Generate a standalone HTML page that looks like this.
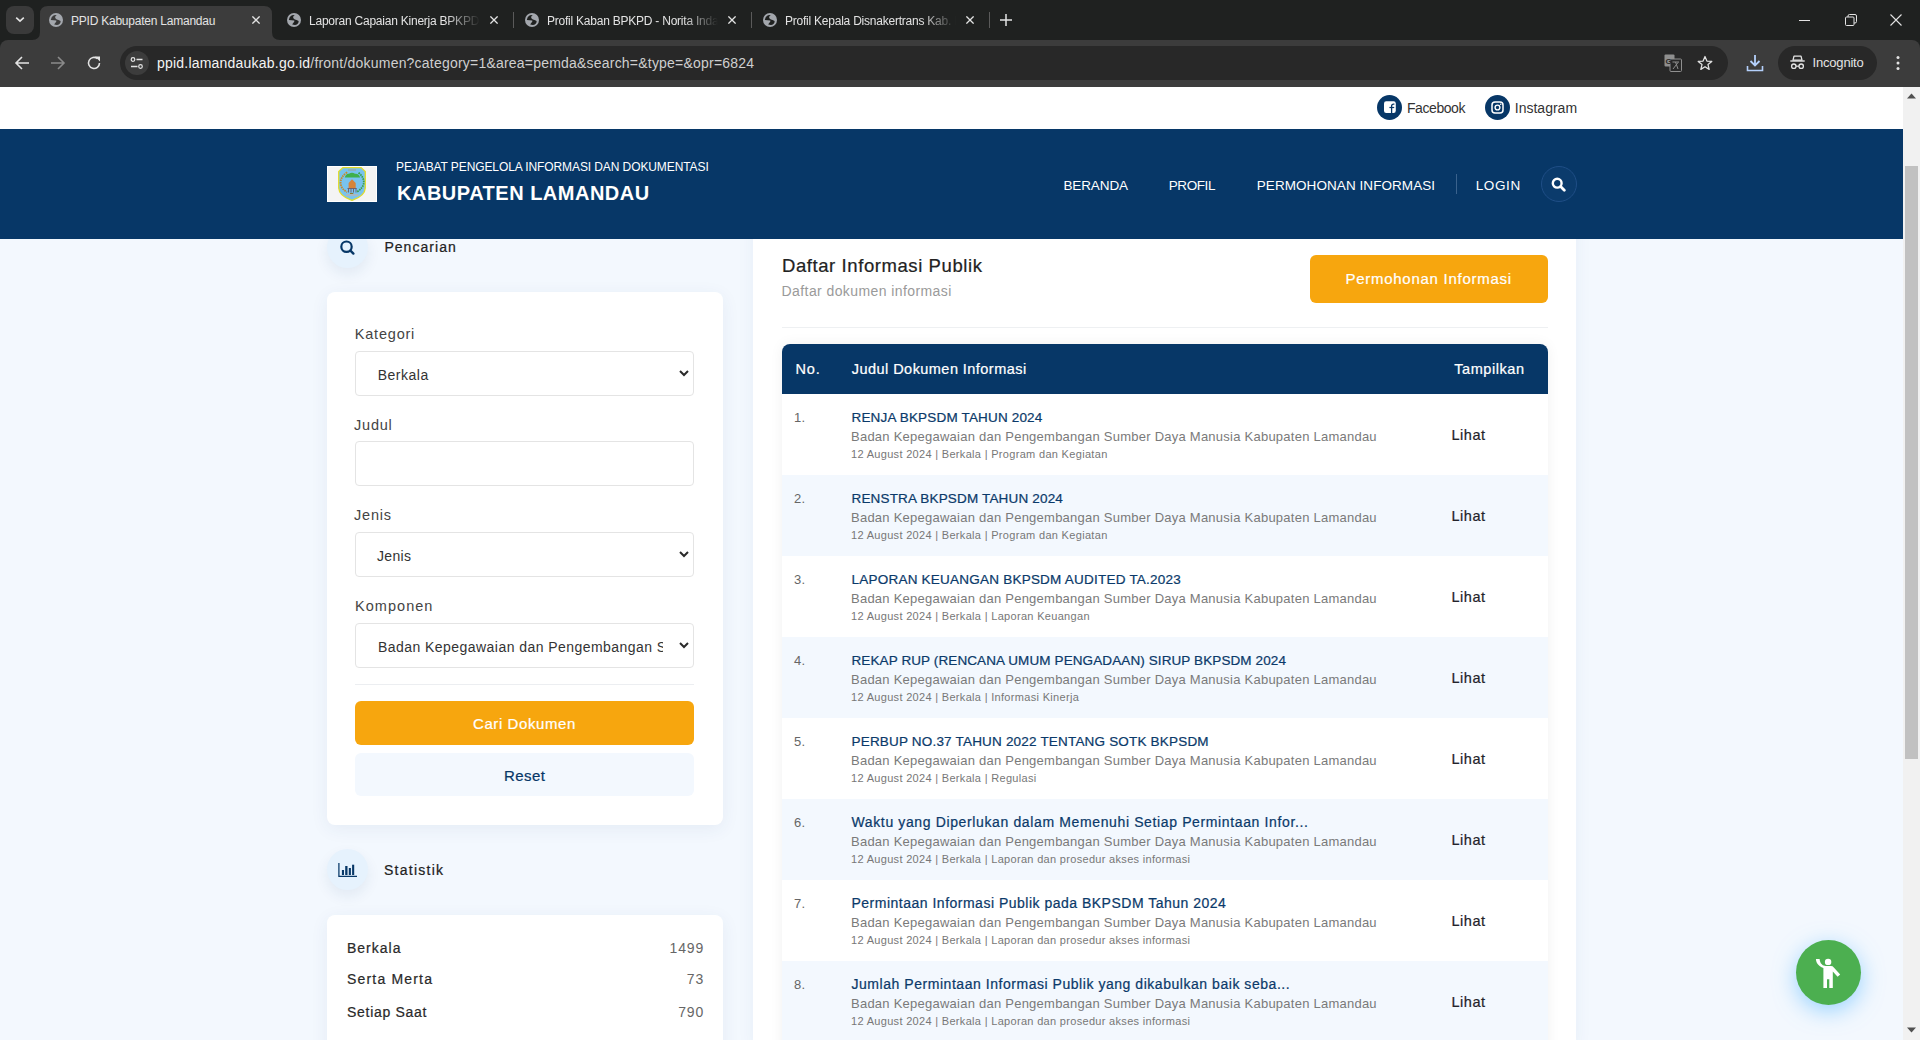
<!DOCTYPE html>
<html><head><meta charset="utf-8"><title>PPID Kabupaten Lamandau</title><style>
*{box-sizing:border-box;margin:0;padding:0}
html,body{width:1920px;height:1040px;overflow:hidden;font-family:"Liberation Sans",sans-serif;background:#f3f8fe}
.abs{position:absolute}
.t{position:absolute;white-space:nowrap}
.fade{-webkit-mask-image:linear-gradient(to right,#000 80%,transparent)}
</style></head><body>
<div class="abs" style="left:0;top:0;width:1920px;height:50px;background:#1f2120"></div>
<div class="abs" style="left:0;top:40px;width:1920px;height:47px;background:#3c3c3c;border-radius:8px 8px 0 0"></div>
<div class="abs" style="left:6px;top:6px;width:28px;height:28px;border-radius:8px;background:#3a3a3a"></div>
<svg class="abs" style="left:14px;top:14px" width="12" height="12" viewBox="0 0 12 12"><path d="M2.2 3.6 L6 7.2 L9.8 3.6" stroke="#e3e3e3" stroke-width="1.6" fill="none"/></svg>
<svg class="abs" style="left:32px;top:6px" width="250" height="34" viewBox="0 0 250 34"><path d="M0 34 Q8 34 8 26 L8 8 Q8 0 16 0 L232 0 Q240 0 240 8 L240 26 Q240 34 248 34 Z" fill="#3c3c3c"/></svg>
<svg class="abs" style="left:49px;top:13px" width="14" height="14" viewBox="0 0 14 14"><circle cx="7" cy="7" r="7" fill="#a3a7ad"/><path d="M1.9 7 L1.9 6.5 Q2.2 3.5 4.9 2.2 Q6.3 1.8 7.7 1.9 Q6 3 6.1 4.2 Q6.2 5.6 7.9 6.5 Q9.5 6.8 11.6 7.9 Q12 8.8 10.7 10.7 Q9.3 11.9 7.9 11.9 L5.2 11.6 Q5.5 10.4 7 8.9 Q7.6 8 7.3 7.4 Q5 7 1.9 7 Z" fill="#3c3c3c"/></svg>
<div class="t " style="left:71.00px;top:14.84px;font-size:12px;line-height:12px;color:#e3e3e3;letter-spacing:-0.23px;">PPID Kabupaten Lamandau</div>

<svg class="abs" style="left:252px;top:16px" width="8" height="8" viewBox="0 0 8 8"><path d="M0.4 0.4 L7.6 7.6 M7.6 0.4 L0.4 7.6" stroke="#e3e3e3" stroke-width="1.3"/></svg>
<svg class="abs" style="left:287px;top:13px" width="14" height="14" viewBox="0 0 14 14"><circle cx="7" cy="7" r="7" fill="#a3a7ad"/><path d="M1.9 7 L1.9 6.5 Q2.2 3.5 4.9 2.2 Q6.3 1.8 7.7 1.9 Q6 3 6.1 4.2 Q6.2 5.6 7.9 6.5 Q9.5 6.8 11.6 7.9 Q12 8.8 10.7 10.7 Q9.3 11.9 7.9 11.9 L5.2 11.6 Q5.5 10.4 7 8.9 Q7.6 8 7.3 7.4 Q5 7 1.9 7 Z" fill="#1f2120"/></svg>
<div class="abs fade" style="left:309px;top:8px;width:171px;height:24px;overflow:hidden"><div class="t " style="left:0.00px;top:6.84px;font-size:12px;line-height:12px;color:#e3e3e3;letter-spacing:-0.23px;">Laporan Capaian Kinerja BPKPD</div>
</div>
<svg class="abs" style="left:490px;top:16px" width="8" height="8" viewBox="0 0 8 8"><path d="M0.4 0.4 L7.6 7.6 M7.6 0.4 L0.4 7.6" stroke="#e3e3e3" stroke-width="1.3"/></svg>
<div class="abs" style="left:513px;top:12px;width:1px;height:16px;background:#5a5a5a"></div>
<svg class="abs" style="left:525px;top:13px" width="14" height="14" viewBox="0 0 14 14"><circle cx="7" cy="7" r="7" fill="#a3a7ad"/><path d="M1.9 7 L1.9 6.5 Q2.2 3.5 4.9 2.2 Q6.3 1.8 7.7 1.9 Q6 3 6.1 4.2 Q6.2 5.6 7.9 6.5 Q9.5 6.8 11.6 7.9 Q12 8.8 10.7 10.7 Q9.3 11.9 7.9 11.9 L5.2 11.6 Q5.5 10.4 7 8.9 Q7.6 8 7.3 7.4 Q5 7 1.9 7 Z" fill="#1f2120"/></svg>
<div class="abs fade" style="left:547px;top:8px;width:171px;height:24px;overflow:hidden"><div class="t " style="left:0.00px;top:6.84px;font-size:12px;line-height:12px;color:#e3e3e3;letter-spacing:-0.23px;">Profil Kaban BPKPD - Norita Indah</div>
</div>
<svg class="abs" style="left:728px;top:16px" width="8" height="8" viewBox="0 0 8 8"><path d="M0.4 0.4 L7.6 7.6 M7.6 0.4 L0.4 7.6" stroke="#e3e3e3" stroke-width="1.3"/></svg>
<div class="abs" style="left:751px;top:12px;width:1px;height:16px;background:#5a5a5a"></div>
<svg class="abs" style="left:763px;top:13px" width="14" height="14" viewBox="0 0 14 14"><circle cx="7" cy="7" r="7" fill="#a3a7ad"/><path d="M1.9 7 L1.9 6.5 Q2.2 3.5 4.9 2.2 Q6.3 1.8 7.7 1.9 Q6 3 6.1 4.2 Q6.2 5.6 7.9 6.5 Q9.5 6.8 11.6 7.9 Q12 8.8 10.7 10.7 Q9.3 11.9 7.9 11.9 L5.2 11.6 Q5.5 10.4 7 8.9 Q7.6 8 7.3 7.4 Q5 7 1.9 7 Z" fill="#1f2120"/></svg>
<div class="abs fade" style="left:785px;top:8px;width:171px;height:24px;overflow:hidden"><div class="t " style="left:0.00px;top:6.84px;font-size:12px;line-height:12px;color:#e3e3e3;letter-spacing:-0.23px;">Profil Kepala Disnakertrans Kab. Lamandau</div>
</div>
<svg class="abs" style="left:966px;top:16px" width="8" height="8" viewBox="0 0 8 8"><path d="M0.4 0.4 L7.6 7.6 M7.6 0.4 L0.4 7.6" stroke="#e3e3e3" stroke-width="1.3"/></svg>
<div class="abs" style="left:989px;top:12px;width:1px;height:16px;background:#5a5a5a"></div>
<svg class="abs" style="left:999px;top:13px" width="14" height="14" viewBox="0 0 14 14"><path d="M7 1 V13 M1 7 H13" stroke="#e3e3e3" stroke-width="1.5"/></svg>
<div class="abs" style="left:1799px;top:20px;width:11px;height:1px;background:#e3e3e3"></div>
<svg class="abs" style="left:1845px;top:14px" width="12" height="12" viewBox="0 0 12 12"><rect x="0.5" y="3" width="8.5" height="8.5" rx="1" stroke="#e3e3e3" fill="none"/><path d="M3 3 V2 Q3 0.5 4.5 0.5 H10 Q11.5 0.5 11.5 2 V7.5 Q11.5 9 10 9 H9" stroke="#e3e3e3" fill="none"/></svg>
<svg class="abs" style="left:1890px;top:14px" width="12" height="12" viewBox="0 0 12 12"><path d="M0.5 0.5 L11.5 11.5 M11.5 0.5 L0.5 11.5" stroke="#e3e3e3" stroke-width="1.1"/></svg>
<svg class="abs" style="left:14px;top:55px" width="16" height="16" viewBox="0 0 16 16"><path d="M15 8 H2 M8 2 L2 8 L8 14" stroke="#e3e3e3" stroke-width="1.6" fill="none"/></svg>
<svg class="abs" style="left:50px;top:55px" width="16" height="16" viewBox="0 0 16 16"><path d="M1 8 H14 M8 2 L14 8 L8 14" stroke="#8a8a8a" stroke-width="1.6" fill="none"/></svg>
<svg class="abs" style="left:86px;top:55px" width="16" height="16" viewBox="0 0 16 16"><path d="M13.5 8 A5.5 5.5 0 1 1 11.5 3.7" stroke="#e3e3e3" stroke-width="1.6" fill="none"/><path d="M9 1.5 H14 V6.5 Z" fill="#e3e3e3"/></svg>
<div class="abs" style="left:120px;top:46px;width:1608px;height:34px;border-radius:17px;background:#282828"></div>
<div class="abs" style="left:125px;top:51px;width:24px;height:24px;border-radius:12px;background:#3c3c3c"></div>
<svg class="abs" style="left:130px;top:56px" width="14" height="14" viewBox="0 0 14 14"><circle cx="3" cy="3.5" r="1.8" stroke="#e3e3e3" stroke-width="1.2" fill="none"/><path d="M6.5 3.5 H12.5 M1 10.5 H7.5" stroke="#e3e3e3" stroke-width="1.3"/><circle cx="10.5" cy="10.5" r="1.8" stroke="#e3e3e3" stroke-width="1.2" fill="none"/></svg>
<div class="t " style="left:157.00px;top:56.15px;font-size:14px;line-height:14px;color:#cfcfcf;letter-spacing:0.21px;"><span style="color:#f4f4f4">ppid.lamandaukab.go.id</span>/front/dokumen?category=1&amp;area=pemda&amp;search=&amp;type=&amp;opr=6824</div>


<svg class="abs" style="left:1664px;top:54px" width="18" height="18" viewBox="0 0 18 18"><rect x="0.5" y="0.5" width="10" height="12" rx="1" fill="#8f8f8f"/><rect x="6" y="5" width="11.5" height="12.5" rx="1" fill="#282828" stroke="#8f8f8f"/><text x="1.5" y="10" font-size="8" font-family="Liberation Sans" font-weight="bold" fill="#282828">G</text><path d="M8.5 8 H15 M11.5 8 L14 15 M14 8.5 L9 15" stroke="#8f8f8f" stroke-width="1"/></svg>
<svg class="abs" style="left:1697px;top:55px" width="16" height="16" viewBox="0 0 16 16"><path d="M8 1.5 L9.9 6.1 L14.8 6.4 L11 9.6 L12.2 14.4 L8 11.7 L3.8 14.4 L5 9.6 L1.2 6.4 L6.1 6.1 Z" stroke="#e3e3e3" stroke-width="1.25" fill="none" stroke-linejoin="round"/></svg>
<svg class="abs" style="left:1746px;top:54px" width="18" height="18" viewBox="0 0 18 18"><path d="M9 1 V11 M4.5 7 L9 11.5 L13.5 7" stroke="#b4d0fb" stroke-width="1.8" fill="none"/><path d="M1.5 12 V16.5 H16.5 V12" stroke="#b4d0fb" stroke-width="1.6" fill="none"/></svg>
<div class="abs" style="left:1778px;top:46px;width:99px;height:34px;border-radius:17px;background:#282828"></div>
<svg class="abs" style="left:1790px;top:55px" width="15" height="15" viewBox="0 0 15 15"><path d="M4 1.2 H11 L12 5.2 H3 Z" stroke="#e3e3e3" stroke-width="1.3" fill="none" stroke-linejoin="round"/><path d="M0.3 6 H14.7" stroke="#e3e3e3" stroke-width="1.4"/><circle cx="3.8" cy="11.2" r="2.2" stroke="#e3e3e3" stroke-width="1.3" fill="none"/><circle cx="11.2" cy="11.2" r="2.2" stroke="#e3e3e3" stroke-width="1.3" fill="none"/><path d="M6 11.2 H9" stroke="#e3e3e3" stroke-width="1.2"/></svg>
<div class="t " style="left:1812.60px;top:56.00px;font-size:13px;line-height:13px;color:#e3e3e3;letter-spacing:-0.2px;">Incognito</div>

<svg class="abs" style="left:1895px;top:55px" width="6" height="16" viewBox="0 0 6 16"><circle cx="3" cy="2.5" r="1.5" fill="#e3e3e3"/><circle cx="3" cy="8" r="1.5" fill="#e3e3e3"/><circle cx="3" cy="13.5" r="1.5" fill="#e3e3e3"/></svg>
<div class="abs" style="left:0;top:87px;width:1903px;height:953px;background:#f3f8fe"></div>
<div class="abs" style="left:753px;top:150px;width:823px;height:900px;background:#fff;border-radius:8px;box-shadow:0 0 18px rgba(40,70,130,.055)"></div>
<div class="t " style="left:782.00px;top:256.64px;font-size:18.5px;line-height:18.5px;color:#222;letter-spacing:0.58px;-webkit-text-stroke:0.22px #222;">Daftar Informasi Publik</div>

<div class="t " style="left:781.60px;top:284.15px;font-size:14px;line-height:14px;color:#9a9a9a;letter-spacing:0.41px;">Daftar dokumen informasi</div>

<div class="abs" style="left:1310px;top:255px;width:238px;height:48px;border-radius:6px;background:#f7a60e"></div>
<div class="t " style="left:1345.40px;top:271.40px;font-size:15px;line-height:15px;color:#fff;letter-spacing:0.74px;-webkit-text-stroke:0.22px #fff;">Permohonan Informasi</div>

<div class="abs" style="left:782px;top:327px;width:766px;height:1px;background:#eef0f2"></div>
<div class="abs" style="left:782px;top:344px;width:766px;height:720px;border-radius:8px 8px 0 0;box-shadow:0 0 14px rgba(0,0,0,.06)"></div>
<div class="abs" style="left:782px;top:344px;width:766px;height:50px;border-radius:8px 8px 0 0;background:#073767"></div>
<div class="t " style="left:795.60px;top:361.93px;font-size:14.5px;line-height:14.5px;color:#fff;letter-spacing:0.8px;-webkit-text-stroke:0.22px #fff;">No.</div>

<div class="t " style="left:851.80px;top:361.93px;font-size:14.5px;line-height:14.5px;color:#fff;letter-spacing:0.45px;-webkit-text-stroke:0.22px #fff;">Judul Dokumen Informasi</div>

<div class="t " style="left:1454.30px;top:361.93px;font-size:14.5px;line-height:14.5px;color:#fff;letter-spacing:0.55px;-webkit-text-stroke:0.22px #fff;">Tampilkan</div>

<div class="abs" style="left:782px;top:394px;width:766px;height:81px;background:#fff"></div>
<div class="t " style="left:794.00px;top:411.00px;font-size:13px;line-height:13px;color:#666;letter-spacing:0.3px;">1.</div>

<div class="t " style="left:851.50px;top:410.57px;font-size:13.5px;line-height:13.5px;color:#0b3a6a;letter-spacing:0.168px;-webkit-text-stroke:0.22px #0b3a6a;">RENJA BKPSDM TAHUN 2024</div>

<div class="t " style="left:851.00px;top:430.00px;font-size:13px;line-height:13px;color:#7a7a7a;letter-spacing:0.243px;">Badan Kepegawaian dan Pengembangan Sumber Daya Manusia Kabupaten Lamandau</div>

<div class="t " style="left:851.00px;top:448.69px;font-size:11px;line-height:11px;color:#777;letter-spacing:0.315px;">12 August 2024 | Berkala | Program dan Kegiatan</div>

<div class="t " style="left:1451.40px;top:427.93px;font-size:14.5px;line-height:14.5px;color:#23232b;letter-spacing:0.58px;-webkit-text-stroke:0.22px #23232b;">Lihat</div>

<div class="abs" style="left:782px;top:475px;width:766px;height:81px;background:#f3f8fe"></div>
<div class="t " style="left:794.00px;top:492.00px;font-size:13px;line-height:13px;color:#666;letter-spacing:0.3px;">2.</div>

<div class="t " style="left:851.50px;top:491.57px;font-size:13.5px;line-height:13.5px;color:#0b3a6a;letter-spacing:0.167px;-webkit-text-stroke:0.22px #0b3a6a;">RENSTRA BKPSDM TAHUN 2024</div>

<div class="t " style="left:851.00px;top:511.00px;font-size:13px;line-height:13px;color:#7a7a7a;letter-spacing:0.243px;">Badan Kepegawaian dan Pengembangan Sumber Daya Manusia Kabupaten Lamandau</div>

<div class="t " style="left:851.00px;top:529.69px;font-size:11px;line-height:11px;color:#777;letter-spacing:0.315px;">12 August 2024 | Berkala | Program dan Kegiatan</div>

<div class="t " style="left:1451.40px;top:508.93px;font-size:14.5px;line-height:14.5px;color:#23232b;letter-spacing:0.58px;-webkit-text-stroke:0.22px #23232b;">Lihat</div>

<div class="abs" style="left:782px;top:556px;width:766px;height:81px;background:#fff"></div>
<div class="t " style="left:794.00px;top:573.00px;font-size:13px;line-height:13px;color:#666;letter-spacing:0.3px;">3.</div>

<div class="t " style="left:851.50px;top:572.57px;font-size:13.5px;line-height:13.5px;color:#0b3a6a;letter-spacing:0.229px;-webkit-text-stroke:0.22px #0b3a6a;">LAPORAN KEUANGAN BKPSDM AUDITED TA.2023</div>

<div class="t " style="left:851.00px;top:592.00px;font-size:13px;line-height:13px;color:#7a7a7a;letter-spacing:0.243px;">Badan Kepegawaian dan Pengembangan Sumber Daya Manusia Kabupaten Lamandau</div>

<div class="t " style="left:851.00px;top:610.69px;font-size:11px;line-height:11px;color:#777;letter-spacing:0.315px;">12 August 2024 | Berkala | Laporan Keuangan</div>

<div class="t " style="left:1451.40px;top:589.93px;font-size:14.5px;line-height:14.5px;color:#23232b;letter-spacing:0.58px;-webkit-text-stroke:0.22px #23232b;">Lihat</div>

<div class="abs" style="left:782px;top:637px;width:766px;height:81px;background:#f3f8fe"></div>
<div class="t " style="left:794.00px;top:654.00px;font-size:13px;line-height:13px;color:#666;letter-spacing:0.3px;">4.</div>

<div class="t " style="left:851.50px;top:653.57px;font-size:13.5px;line-height:13.5px;color:#0b3a6a;letter-spacing:0.104px;-webkit-text-stroke:0.22px #0b3a6a;">REKAP RUP (RENCANA UMUM PENGADAAN) SIRUP BKPSDM 2024</div>

<div class="t " style="left:851.00px;top:673.00px;font-size:13px;line-height:13px;color:#7a7a7a;letter-spacing:0.243px;">Badan Kepegawaian dan Pengembangan Sumber Daya Manusia Kabupaten Lamandau</div>

<div class="t " style="left:851.00px;top:691.69px;font-size:11px;line-height:11px;color:#777;letter-spacing:0.315px;">12 August 2024 | Berkala | Informasi Kinerja</div>

<div class="t " style="left:1451.40px;top:670.93px;font-size:14.5px;line-height:14.5px;color:#23232b;letter-spacing:0.58px;-webkit-text-stroke:0.22px #23232b;">Lihat</div>

<div class="abs" style="left:782px;top:718px;width:766px;height:81px;background:#fff"></div>
<div class="t " style="left:794.00px;top:735.00px;font-size:13px;line-height:13px;color:#666;letter-spacing:0.3px;">5.</div>

<div class="t " style="left:851.50px;top:734.57px;font-size:13.5px;line-height:13.5px;color:#0b3a6a;letter-spacing:0.19px;-webkit-text-stroke:0.22px #0b3a6a;">PERBUP NO.37 TAHUN 2022 TENTANG SOTK BKPSDM</div>

<div class="t " style="left:851.00px;top:754.00px;font-size:13px;line-height:13px;color:#7a7a7a;letter-spacing:0.243px;">Badan Kepegawaian dan Pengembangan Sumber Daya Manusia Kabupaten Lamandau</div>

<div class="t " style="left:851.00px;top:772.69px;font-size:11px;line-height:11px;color:#777;letter-spacing:0.315px;">12 August 2024 | Berkala | Regulasi</div>

<div class="t " style="left:1451.40px;top:751.93px;font-size:14.5px;line-height:14.5px;color:#23232b;letter-spacing:0.58px;-webkit-text-stroke:0.22px #23232b;">Lihat</div>

<div class="abs" style="left:782px;top:799px;width:766px;height:81px;background:#f3f8fe"></div>
<div class="t " style="left:794.00px;top:816.00px;font-size:13px;line-height:13px;color:#666;letter-spacing:0.3px;">6.</div>

<div class="t " style="left:851.50px;top:815.15px;font-size:14px;line-height:14px;color:#0b3a6a;letter-spacing:0.629px;-webkit-text-stroke:0.22px #0b3a6a;">Waktu yang Diperlukan dalam Memenuhi Setiap Permintaan Infor...</div>

<div class="t " style="left:851.00px;top:835.00px;font-size:13px;line-height:13px;color:#7a7a7a;letter-spacing:0.243px;">Badan Kepegawaian dan Pengembangan Sumber Daya Manusia Kabupaten Lamandau</div>

<div class="t " style="left:851.00px;top:853.69px;font-size:11px;line-height:11px;color:#777;letter-spacing:0.315px;">12 August 2024 | Berkala | Laporan dan prosedur akses informasi</div>

<div class="t " style="left:1451.40px;top:832.93px;font-size:14.5px;line-height:14.5px;color:#23232b;letter-spacing:0.58px;-webkit-text-stroke:0.22px #23232b;">Lihat</div>

<div class="abs" style="left:782px;top:880px;width:766px;height:81px;background:#fff"></div>
<div class="t " style="left:794.00px;top:897.00px;font-size:13px;line-height:13px;color:#666;letter-spacing:0.3px;">7.</div>

<div class="t " style="left:851.50px;top:896.15px;font-size:14px;line-height:14px;color:#0b3a6a;letter-spacing:0.498px;-webkit-text-stroke:0.22px #0b3a6a;">Permintaan Informasi Publik pada BKPSDM Tahun 2024</div>

<div class="t " style="left:851.00px;top:916.00px;font-size:13px;line-height:13px;color:#7a7a7a;letter-spacing:0.243px;">Badan Kepegawaian dan Pengembangan Sumber Daya Manusia Kabupaten Lamandau</div>

<div class="t " style="left:851.00px;top:934.69px;font-size:11px;line-height:11px;color:#777;letter-spacing:0.315px;">12 August 2024 | Berkala | Laporan dan prosedur akses informasi</div>

<div class="t " style="left:1451.40px;top:913.93px;font-size:14.5px;line-height:14.5px;color:#23232b;letter-spacing:0.58px;-webkit-text-stroke:0.22px #23232b;">Lihat</div>

<div class="abs" style="left:782px;top:961px;width:766px;height:81px;background:#f3f8fe"></div>
<div class="t " style="left:794.00px;top:978.00px;font-size:13px;line-height:13px;color:#666;letter-spacing:0.3px;">8.</div>

<div class="t " style="left:851.50px;top:977.15px;font-size:14px;line-height:14px;color:#0b3a6a;letter-spacing:0.54px;-webkit-text-stroke:0.22px #0b3a6a;">Jumlah Permintaan Informasi Publik yang dikabulkan baik seba...</div>

<div class="t " style="left:851.00px;top:997.00px;font-size:13px;line-height:13px;color:#7a7a7a;letter-spacing:0.243px;">Badan Kepegawaian dan Pengembangan Sumber Daya Manusia Kabupaten Lamandau</div>

<div class="t " style="left:851.00px;top:1015.69px;font-size:11px;line-height:11px;color:#777;letter-spacing:0.315px;">12 August 2024 | Berkala | Laporan dan prosedur akses informasi</div>

<div class="t " style="left:1451.40px;top:994.93px;font-size:14.5px;line-height:14.5px;color:#23232b;letter-spacing:0.58px;-webkit-text-stroke:0.22px #23232b;">Lihat</div>

<div class="abs" style="left:327px;top:227px;width:41px;height:41px;border-radius:50%;background:#e6f2fd;box-shadow:0 6px 14px rgba(30,60,110,.08)"></div>
<svg class="abs" style="left:340px;top:240px" width="16" height="16" viewBox="0 0 16 16"><circle cx="6.5" cy="6.7" r="5.2" stroke="#073767" stroke-width="2.2" fill="none"/><path d="M10.4 10.6 L13.4 13.6" stroke="#073767" stroke-width="2.4" stroke-linecap="round"/></svg>
<div class="t " style="left:384.40px;top:239.95px;font-size:14px;line-height:14px;color:#222;letter-spacing:1.04px;-webkit-text-stroke:0.22px #222;">Pencarian</div>

<div class="abs" style="left:327px;top:292px;width:396px;height:533px;background:#fff;border-radius:8px;box-shadow:0 4px 18px rgba(40,70,130,.07)"></div>
<div class="t " style="left:354.80px;top:326.93px;font-size:14.5px;line-height:14.5px;color:#444;letter-spacing:0.79px;">Kategori</div>

<div class="abs" style="left:355px;top:351px;width:339px;height:45px;border:1px solid #e4e4e4;border-radius:4px;background:#fff"></div><svg class="abs" style="left:679px;top:370px" width="10" height="7" viewBox="0 0 10 7"><path d="M1 1 L5 5 L9 1" stroke="#2a2a2a" stroke-width="2" fill="none"/></svg>
<div class="t " style="left:377.75px;top:367.95px;font-size:14px;line-height:14px;color:#333;letter-spacing:0.5px;">Berkala</div>

<div class="t " style="left:354.00px;top:417.73px;font-size:14.5px;line-height:14.5px;color:#444;letter-spacing:0.79px;">Judul</div>

<div class="abs" style="left:355px;top:441px;width:339px;height:45px;border:1px solid #e4e4e4;border-radius:4px;background:#fff"></div>
<div class="t " style="left:354.00px;top:507.73px;font-size:14.5px;line-height:14.5px;color:#444;letter-spacing:0.79px;">Jenis</div>

<div class="abs" style="left:355px;top:532px;width:339px;height:45px;border:1px solid #e4e4e4;border-radius:4px;background:#fff"></div><svg class="abs" style="left:679px;top:551px" width="10" height="7" viewBox="0 0 10 7"><path d="M1 1 L5 5 L9 1" stroke="#2a2a2a" stroke-width="2" fill="none"/></svg>
<div class="t " style="left:377.00px;top:549.15px;font-size:14px;line-height:14px;color:#333;letter-spacing:0.3px;">Jenis</div>

<div class="t " style="left:355.00px;top:599.33px;font-size:14.5px;line-height:14.5px;color:#444;letter-spacing:1.04px;">Komponen</div>

<div class="abs" style="left:355px;top:623px;width:339px;height:45px;border:1px solid #e4e4e4;border-radius:4px;background:#fff"></div><svg class="abs" style="left:679px;top:642px" width="10" height="7" viewBox="0 0 10 7"><path d="M1 1 L5 5 L9 1" stroke="#2a2a2a" stroke-width="2" fill="none"/></svg>
<div class="abs" style="left:370px;top:630px;width:293px;height:30px;overflow:hidden"><div class="t " style="left:8.00px;top:10.45px;font-size:14px;line-height:14px;color:#333;letter-spacing:0.45px;">Badan Kepegawaian dan Pengembangan Sumber Daya Manusia</div>
</div>
<div class="abs" style="left:355px;top:684px;width:339px;height:1px;background:#eceef1"></div>
<div class="abs" style="left:355px;top:701px;width:339px;height:44px;border-radius:6px;background:#f7a60e"></div>
<div class="t " style="left:473.00px;top:715.70px;font-size:15px;line-height:15px;color:#fff;letter-spacing:0.58px;-webkit-text-stroke:0.22px #fff;">Cari Dokumen</div>

<div class="abs" style="left:355px;top:753px;width:339px;height:43px;border-radius:6px;background:#f3f8fe"></div>
<div class="t " style="left:504.00px;top:767.70px;font-size:15px;line-height:15px;color:#073767;letter-spacing:0.44px;-webkit-text-stroke:0.22px #073767;">Reset</div>

<div class="abs" style="left:327px;top:849px;width:41px;height:41px;border-radius:50%;background:#e6f2fd;box-shadow:0 6px 14px rgba(30,60,110,.08)"></div>
<svg class="abs" style="left:338px;top:862px" width="20" height="16" viewBox="0 0 20 16"><path d="M0.9 1 V14.4 H19" stroke="#073767" stroke-width="1.25" fill="none"/><rect x="3.9" y="8" width="2.1" height="5" fill="#073767"/><rect x="7.2" y="4" width="2.3" height="9" fill="#073767"/><rect x="10.8" y="6" width="2.1" height="7" fill="#073767"/><rect x="14.1" y="2.7" width="2.1" height="10.3" fill="#073767"/></svg>
<div class="t " style="left:384.00px;top:862.95px;font-size:14px;line-height:14px;color:#222;letter-spacing:1.25px;-webkit-text-stroke:0.22px #222;">Statistik</div>

<div class="abs" style="left:327px;top:915px;width:396px;height:200px;background:#fff;border-radius:8px;box-shadow:0 4px 18px rgba(40,70,130,.07)"></div>
<div class="t " style="left:347.00px;top:940.65px;font-size:14px;line-height:14px;color:#2a2a2a;letter-spacing:1.0px;-webkit-text-stroke:0.22px #2a2a2a;">Berkala</div>

<div class="t" style="right:1216.7px;top:940.65px;font-size:14px;line-height:14px;color:#666;letter-spacing:0.87px;margin-right:-0.87px">1499</div>
<div class="t " style="left:347.00px;top:972.25px;font-size:14px;line-height:14px;color:#2a2a2a;letter-spacing:1.18px;-webkit-text-stroke:0.22px #2a2a2a;">Serta Merta</div>

<div class="t" style="right:1216.7px;top:972.25px;font-size:14px;line-height:14px;color:#666;letter-spacing:0.87px;margin-right:-0.87px">73</div>
<div class="t " style="left:347.00px;top:1004.55px;font-size:14px;line-height:14px;color:#2a2a2a;letter-spacing:0.71px;-webkit-text-stroke:0.22px #2a2a2a;">Setiap Saat</div>

<div class="t" style="right:1216.7px;top:1004.55px;font-size:14px;line-height:14px;color:#666;letter-spacing:0.87px;margin-right:-0.87px">790</div>
<div class="abs" style="left:0;top:87px;width:1903px;height:42px;background:#fff"></div>
<div class="abs" style="left:1377px;top:95px;width:25px;height:25px;border-radius:50%;background:#073767"></div>
<svg class="abs" style="left:1384px;top:101px" width="12" height="12" viewBox="0 0 12 12"><rect x="0" y="0.2" width="11.8" height="11.8" rx="2.2" fill="#fff"/><path d="M7.6 12 V5.2 Q7.6 3.2 9.6 3.2 H10.4" stroke="#073767" stroke-width="1.3" fill="none"/><path d="M5.4 6.5 H10.2" stroke="#073767" stroke-width="1.2"/></svg>
<div class="t " style="left:1407.00px;top:100.85px;font-size:14px;line-height:14px;color:#333;letter-spacing:-0.43px;">Facebook</div>

<div class="abs" style="left:1485px;top:95px;width:25px;height:25px;border-radius:50%;background:#073767"></div>
<svg class="abs" style="left:1491px;top:101px" width="13" height="13" viewBox="0 0 13 13"><rect x="1" y="1" width="11" height="11" rx="3" stroke="#fff" stroke-width="1.5" fill="none"/><circle cx="6.5" cy="6.5" r="2.4" stroke="#fff" stroke-width="1.4" fill="none"/><circle cx="9.7" cy="3.3" r=".8" fill="#fff"/></svg>
<div class="t " style="left:1514.80px;top:100.85px;font-size:14px;line-height:14px;color:#333;letter-spacing:0px;">Instagram</div>

<div class="abs" style="left:0;top:129px;width:1903px;height:110px;background:#073767"></div>
<div class="abs" style="left:327px;top:166px;width:50px;height:36px;background:#f4f4f4;border:1px solid #fff"></div>
<svg class="abs" style="left:338px;top:167px" width="28" height="34" viewBox="0 0 28 34"><path d="M5 0.6 L23 0.6 L27.3 4.5 L27.3 21 Q27 29 14 33.4 Q1 29 0.7 21 L0.7 4.5 Z" fill="#78c3ee" stroke="#e2dc2a" stroke-width="1.3"/><rect x="10" y="2.3" width="8" height="1.4" fill="#9aa"/><path d="M6.8 10.5 Q8 6.5 11 6.8 Q14 4.8 17 6.8 Q21 6.4 22.1 10.5 Z" fill="#3fb04a"/><path d="M14 12.2 L17.7 16 L17.7 21.5 L10.6 21.5 L10.6 16 Z" fill="#d6843a"/><path d="M9.5 21.5 H18.7 M10.5 21.5 V25.5 M13 21.5 V25.5 M15.5 21.5 V25.5 M18 21.5 V25.5" stroke="#6b5a6a" stroke-width="0.9"/><path d="M9.2 5.3 Q2.3 10 2.6 16.2 Q3 22 9.2 25.1" stroke="#c98a2a" stroke-width="1.8" fill="none" stroke-dasharray="1.6 0.8"/><path d="M20.5 5.7 Q25.8 10 25.8 15.4 Q25.5 21 18.5 25.1" stroke="#3aa04a" stroke-width="1.8" fill="none" stroke-dasharray="1.6 0.8"/><rect x="12" y="25.9" width="3.3" height="2.4" fill="#8a7a30"/><rect x="7.6" y="27" width="12.9" height="2" rx="1" fill="#a9b8c0"/></svg>
<div class="t " style="left:396.00px;top:160.84px;font-size:12px;line-height:12px;color:#fff;letter-spacing:-0.095px;">PEJABAT PENGELOLA INFORMASI DAN DOKUMENTASI</div>

<div class="t " style="left:397.00px;top:183.07px;font-size:20px;line-height:20px;color:#fff;letter-spacing:0.5px;font-weight:700;">KABUPATEN LAMANDAU</div>

<div class="t " style="left:1063.40px;top:178.57px;font-size:13.5px;line-height:13.5px;color:#fff;letter-spacing:-0.1px;">BERANDA</div>

<div class="t " style="left:1168.75px;top:178.57px;font-size:13.5px;line-height:13.5px;color:#fff;letter-spacing:-0.42px;">PROFIL</div>

<div class="t " style="left:1256.75px;top:178.57px;font-size:13.5px;line-height:13.5px;color:#fff;letter-spacing:0.07px;">PERMOHONAN INFORMASI</div>

<div class="abs" style="left:1456px;top:174px;width:1px;height:20px;background:#3a628d"></div>
<div class="t " style="left:1475.70px;top:178.57px;font-size:13.5px;line-height:13.5px;color:#fff;letter-spacing:0.62px;">LOGIN</div>

<div class="abs" style="left:1541px;top:166px;width:36px;height:36px;border-radius:50%;background:#0b3b6c;border:1px solid #1f4e86"></div>
<svg class="abs" style="left:1551px;top:177px" width="15" height="15" viewBox="0 0 15 15"><circle cx="6.2" cy="6.2" r="4.4" stroke="#fff" stroke-width="2.4" fill="none"/><path d="M9.6 9.6 L13.3 13.3" stroke="#fff" stroke-width="2.8" stroke-linecap="round"/></svg>
<div class="abs" style="left:1796px;top:940px;width:65px;height:65px;border-radius:50%;background:#4caf50;box-shadow:0 6px 22px rgba(80,180,255,.55)"></div>
<svg class="abs" style="left:1813px;top:957px" width="30" height="33" viewBox="0 0 30 33"><circle cx="15.1" cy="4.9" r="3.2" fill="#fff"/><path d="M2.9 2 Q3.1 6.3 6.6 9.1 Q8.5 10.5 10.4 11.1 V31 H14 V22.3 H16.3 V31 H19.8 V14.4 L24.6 19.8 L27.2 17.4 L20.8 10.4 Q19.7 9.1 18 9.1 H12.6 Q9.4 8.6 7.8 6.2 Q6.8 4.5 6.6 2 Z" fill="#fff"/></svg>
<div class="abs" style="left:1903px;top:87px;width:17px;height:953px;background:#f1f1f1"></div>
<svg class="abs" style="left:1907px;top:93px" width="9" height="6" viewBox="0 0 9 6"><path d="M0 5.5 L4.5 0.5 L9 5.5 Z" fill="#505050"/></svg>
<div class="abs" style="left:1905px;top:166px;width:13px;height:593px;background:#c1c1c1"></div>
<svg class="abs" style="left:1907px;top:1027px" width="9" height="6" viewBox="0 0 9 6"><path d="M0 0.5 L4.5 5.5 L9 0.5 Z" fill="#505050"/></svg>
</body></html>
